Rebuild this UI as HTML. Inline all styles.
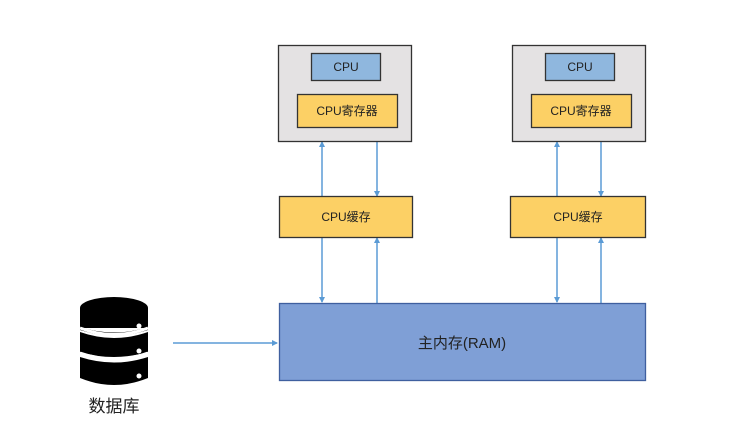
<!DOCTYPE html>
<html><head><meta charset="utf-8"><style>
html,body{margin:0;padding:0;background:#fff;width:741px;height:425px;overflow:hidden}
svg{display:block}
text{font-family:"Liberation Sans","Noto Sans CJK SC",sans-serif;fill:#222}
</style></head><body>
<svg width="741" height="425" viewBox="0 0 741 425" xmlns="http://www.w3.org/2000/svg">
<defs>
<marker id="a" markerWidth="6" markerHeight="6" refX="5" refY="3" orient="auto" markerUnits="userSpaceOnUse">
<path d="M0,0 L6,3 L0,6 z" fill="#5b9bd5"/></marker>
</defs>
<g stroke="#5b9bd5" stroke-width="1.5" fill="none" marker-end="url(#a)">
<line x1="322" y1="196" x2="322" y2="142"/>
<line x1="377" y1="142" x2="377" y2="196"/>
<line x1="322" y1="238" x2="322" y2="302"/>
<line x1="377" y1="303" x2="377" y2="238"/>
<line x1="557" y1="196" x2="557" y2="142"/>
<line x1="601" y1="142" x2="601" y2="196"/>
<line x1="557" y1="238" x2="557" y2="302"/>
<line x1="601" y1="303" x2="601" y2="238"/>
<line x1="173" y1="343" x2="277" y2="343"/>
</g>
<g stroke="#333" stroke-width="1.3">
<rect x="278.5" y="45.5" width="133" height="96" fill="#e4e2e3"/>
<rect x="311.5" y="53.5" width="69" height="27" fill="#8fb7de"/>
<rect x="297.5" y="94.5" width="100" height="33" fill="#fcd065"/>
<rect x="512.5" y="45.5" width="133" height="96" fill="#e4e2e3"/>
<rect x="545.5" y="53.5" width="69" height="27" fill="#8fb7de"/>
<rect x="531.5" y="94.5" width="100" height="33" fill="#fcd065"/>
<rect x="279.5" y="196.5" width="133" height="41" fill="#fcd065"/>
<rect x="510.5" y="196.5" width="135" height="41" fill="#fcd065"/>
</g>
<rect x="279.5" y="303.5" width="366" height="77" fill="#7f9fd6" stroke="#3f5f9f" stroke-width="1.3"/>
<g font-size="12" text-anchor="middle">
<text x="346" y="71">CPU</text>
<text x="347" y="115">CPU寄存器</text>
<text x="580" y="71">CPU</text>
<text x="581" y="115">CPU寄存器</text>
<text x="346" y="221">CPU缓存</text>
<text x="578" y="221">CPU缓存</text>
</g>
<text x="462" y="348" font-size="15" text-anchor="middle">主内存(RAM)</text>
<g fill="#000">
<ellipse cx="114" cy="308" rx="34" ry="11"/>
<rect x="80" y="308" width="68" height="20"/>
<path d="M80,332 Q114,344 148,332 L148,352 Q114,362 80,352 Z"/>
<path d="M80,357 Q114,368 148,357 L148,378 Q114,392 80,378 Z"/>
<path d="M80,327 Q114,338 148,327 L148,330 Q114,341 80,330 Z" fill="#000"/>
</g>
<path d="M80,328 Q114,341 148,328" stroke="#fff" stroke-width="3" fill="none"/>
<path d="M80,353 Q114,365 148,353" stroke="#fff" stroke-width="3" fill="none"/>
<g fill="#fff"><circle cx="139" cy="326" r="2.5"/><circle cx="139" cy="351" r="2.5"/><circle cx="139" cy="376" r="2.5"/></g>
<text x="114" y="412" font-size="17" text-anchor="middle">数据库</text>
</svg>
</body></html>
